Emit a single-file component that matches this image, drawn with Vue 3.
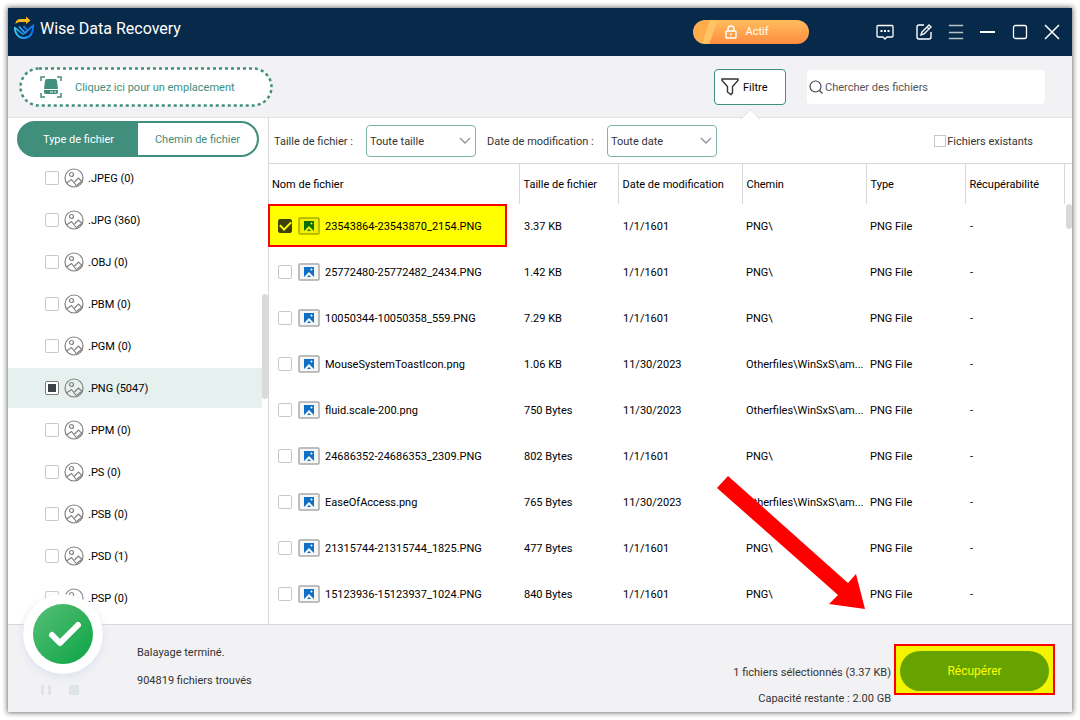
<script setup>
import { ref } from 'vue'

const types = [
  ['.JPEG', 0], ['.JPG', 360], ['.OBJ', 0], ['.PBM', 0], ['.PGM', 0], ['.PNG', 5047],
  ['.PPM', 0], ['.PS', 0], ['.PSB', 0], ['.PSD', 1], ['.PSP', 0],
].map(([name, count]) => ({ name, count, partial: name === '.PNG' }))

const columns = ['Nom de fichier', 'Taille de fichier', 'Date de modification', 'Chemin', 'Type', 'Récupérabilité']

const files = ref([
  { name: '23543864-23543870_2154.PNG', size: '3.37 KB', date: '1/1/1601', path: 'PNG\\', checked: true },
  { name: '25772480-25772482_2434.PNG', size: '1.42 KB', date: '1/1/1601', path: 'PNG\\' },
  { name: '10050344-10050358_559.PNG', size: '7.29 KB', date: '1/1/1601', path: 'PNG\\' },
  { name: 'MouseSystemToastIcon.png', size: '1.06 KB', date: '11/30/2023', path: 'Otherfiles\\WinSxS\\am...' },
  { name: 'fluid.scale-200.png', size: '750 Bytes', date: '11/30/2023', path: 'Otherfiles\\WinSxS\\am...' },
  { name: '24686352-24686353_2309.PNG', size: '802 Bytes', date: '1/1/1601', path: 'PNG\\' },
  { name: 'EaseOfAccess.png', size: '765 Bytes', date: '11/30/2023', path: 'Otherfiles\\WinSxS\\am...' },
  { name: '21315744-21315744_1825.PNG', size: '477 Bytes', date: '1/1/1601', path: 'PNG\\' },
  { name: '15123936-15123937_1024.PNG', size: '840 Bytes', date: '1/1/1601', path: 'PNG\\' },
])
</script>

<template>
  <div class="desk">
    <div class="window">
      <header class="titlebar">
        <svg class="logo" width="22" height="24" viewBox="0 0 22 24" fill="none">
          <defs><linearGradient id="blue" x1="0" y1="0" x2="1" y2="0"><stop offset="0" stop-color="#35c8f2" /><stop offset="1" stop-color="#1273f5" /></linearGradient></defs>
          <path d="M2.500 8C2.500 5 4.500 3 8 3h5V0.500L17.500 4.500 13 8V6H8C5.500 6 4 6.500 2.500 8z" fill="#f9b621" />
          <path d="M1.800 11c0 7 4 11 9.200 11s9-4 9.200-12.500c-3 2-5 4.500-8.200 7.500L6 10.500" stroke="url(#blue)" stroke-width="1.800" />
          <path d="M2 12c3 1.500 5 5 9 6.500M10.500 10l3.500 4" stroke="url(#blue)" stroke-width="1.600" />
        </svg>
        <h1>Wise Data Recovery</h1>
        <button class="active" type="button">
          <svg width="12" height="14" viewBox="0 0 12 14" fill="none" stroke="#fff" stroke-width="1.500">
            <rect x="1" y="6" width="10" height="7" rx="1" /><path d="M3 6V4a3 3 0 0 1 6 0v2M6 8.500v2" />
          </svg>
          Actif
        </button>
        <nav class="tools">
          <button type="button" aria-label="Commentaires">
            <svg width="18" height="18" viewBox="0 0 18 18" fill="none" stroke="#fff" stroke-width="1.300">
              <path d="M2 2.500h14q1 0 1 1V13q0 1-1 1h-5l-2 2-2-2H2q-1 0-1-1V3.500q0-1 1-1z" /><path d="M4.500 8h2M8 8h2M11.500 8h2" stroke-width="2" />
            </svg>
          </button>
          <button type="button" aria-label="Modifier">
            <svg width="18" height="18" viewBox="0 0 18 18" fill="none" stroke="#fff" stroke-width="1.400">
              <path d="M9 2H4Q2 2 2 4v10q0 2 2 2h10q2 0 2-2V9" /><path d="M7 9l7-7 2 2-7 7-3 1zM12 4l2 2" />
            </svg>
          </button>
          <button type="button" aria-label="Menu">
            <svg width="18" height="18" viewBox="0 0 18 18" fill="#b5c4c4"><path d="M2 2h14v1H2zM2 9h14v1H2zM2 15h14v1H2z" stroke="#b5c4c4" stroke-width=".5" /></svg>
          </button>
          <button type="button" aria-label="Réduire">
            <svg width="18" height="18" viewBox="0 0 18 18" stroke="#fff" stroke-width="2"><path d="M1 9h15" /></svg>
          </button>
          <button type="button" aria-label="Agrandir">
            <svg width="18" height="18" viewBox="0 0 18 18" fill="none" stroke="#fff" stroke-width="1.300"><rect x="2.500" y="2.500" width="13" height="13" rx="2" /></svg>
          </button>
          <button type="button" aria-label="Fermer">
            <svg width="18" height="18" viewBox="0 0 18 18" stroke="#fff" stroke-width="1.500"><path d="M2 2l14 14M16 2L2 16" /></svg>
          </button>
        </nav>
      </header>

      <div class="toolbar">
        <button class="location" type="button">
          <svg class="dots" width="100%" height="100%">
            <rect x="1.500" y="1.500" width="251" height="37" rx="18.500" fill="#fff" stroke="#408e7c" stroke-width="2.500" stroke-dasharray="3 3" />
          </svg>
          <svg class="drive" width="22" height="22" viewBox="0 0 22 22" fill="#408e7c">
            <path d="M1 5V1h4M17 1h4v4M21 17v4h-4M5 21H1v-4" fill="none" stroke="#408e7c" stroke-width="1.500" />
            <path d="M7 3h8q2 0 2 2l1 8H4l1-8q0-2 2-2z" />
            <path d="M4 14h14v2q0 2-2 2H6q-2 0-2-2z" /><path d="M10 16h3M14 16h2" stroke="#fff" />
          </svg>
          <span class="caption">Cliquez ici pour un emplacement</span>
        </button>
        <button class="filter" type="button">
          <svg width="18" height="18" viewBox="0 0 18 18" fill="none" stroke="#333" stroke-width="1.400">
            <path d="M1 1h16v1.500l-5.500 6V15l-1.500 1.500L6.500 14V8.500L1 2.500z" />
          </svg>
          <span class="caption">Filtre</span>
        </button>
        <label class="search">
          <svg width="14" height="14" viewBox="0 0 14 14" fill="none" stroke="#444" stroke-width="1.200"><circle cx="6.500" cy="6.500" r="5.500" /><path d="M10.500 10.500l3 3" /></svg>
          <input class="caption" type="text" placeholder="Chercher des fichiers" aria-label="Chercher des fichiers" />
        </label>
      </div>

      <main class="body">
        <aside class="side">
          <div class="tabs">
            <button class="on caption" type="button">Type de fichier</button>
            <button class="caption" type="button">Chemin de fichier</button>
          </div>
          <ul class="types">
            <li v-for="t in types" :key="t.name" :class="{ current: t.partial }">
              <label>
                <input type="checkbox" class="box" :class="{ partial: t.partial }" />
                <svg width="20" height="20" viewBox="0 0 20 20" fill="none" stroke="#808080" stroke-width="1.200">
                  <circle cx="10" cy="10" r="9" /><circle cx="7.500" cy="6.500" r="2" />
                  <path d="M2.500 15l5-3.500 5.500 7M10.500 14l4-4 4 4M13 17l4-3" />
                </svg>
                <span class="caption">{{ t.name }} ({{ t.count }})</span>
              </label>
            </li>
          </ul>
          <i class="thumb"></i>
        </aside>

        <section class="content">
          <div class="filters">
            <label class="short caption" for="size">Taille de fichier :</label>
            <span class="pick"><select id="size" class="caption"><option>Toute taille</option></select>
              <svg width="12" height="8" viewBox="0 0 12 8" fill="none" stroke="#8c959c" stroke-width="1.400"><path d="M1 1l5 5 5-5" /></svg></span>
            <label class="long caption" for="date">Date de modification :</label>
            <span class="pick"><select id="date" class="caption"><option>Toute date</option></select>
              <svg width="12" height="8" viewBox="0 0 12 8" fill="none" stroke="#8c959c" stroke-width="1.400"><path d="M1 1l5 5 5-5" /></svg></span>
            <label class="existing"><input type="checkbox" class="box square" /><span class="caption">Fichiers existants</span></label>
          </div>
          <table>
            <colgroup><col class="c1" /><col class="c2" /><col class="c3" /><col class="c4" /><col class="c5" /><col class="c6" /><col /></colgroup>
            <thead>
              <tr><th v-for="c in columns" :key="c">{{ c }}</th><td></td></tr>
            </thead>
            <tbody>
              <tr v-for="f in files" :key="f.name">
                <td class="name">
                  <label :class="{ marked: f.checked }">
                    <input v-model="f.checked" type="checkbox" class="box" />
                    <svg width="22" height="18" viewBox="0 0 22 18">
                      <rect class="frame" x="1" y="1" width="20" height="16" rx="1" stroke-width="1.500" />
                      <path class="photo" d="M6 4h10v10l-5-5-5 5z" /><circle class="sun" cx="13.500" cy="6.500" r="1" />
                      <path class="photo" d="M9 14l2-2 2 2z" />
                    </svg>
                    <span class="caption">{{ f.name }}</span>
                  </label>
                </td>
                <td class="inset">{{ f.size }}</td>
                <td class="inset">{{ f.date }}</td>
                <td>{{ f.path }}</td>
                <td>PNG File</td>
                <td class="inset">-</td>
                <td></td>
              </tr>
            </tbody>
          </table>
          <i class="thumb"></i>
        </section>
      </main>

      <footer class="status">
        <div class="scan">
          <p>Balayage terminé.</p>
          <p>904819 fichiers trouvés</p>
        </div>
        <div class="summary">
          <p>1 fichiers sélectionnés (3.37 KB)</p>
          <p>Capacité restante : 2.00 GB</p>
        </div>
        <div class="callout"><button type="button">Récupérer</button></div>
        <svg class="done" width="80" height="80" viewBox="0 0 80 80">
          <defs><linearGradient id="g" x1="0" y1="0" x2="1" y2="1"><stop offset="0" stop-color="#58bf77" /><stop offset="1" stop-color="#0ba444" /></linearGradient></defs>
          <circle cx="40" cy="40" r="40" fill="#fff" /><circle cx="40" cy="40" r="30" fill="url(#g)" />
          <path d="M29 41l8 8 18-18" fill="none" stroke="#fff" stroke-width="6" stroke-linecap="round" stroke-linejoin="round" />
        </svg>
        <svg class="controls" width="40" height="10" viewBox="0 0 40 10" fill="#dfe5e5"><path d="M0 0h3v10H0zM7 0h3v10H7zM28 0h10v10H28z" /></svg>
      </footer>
      <svg class="arrow" width="150" height="134" viewBox="0 0 150 134"><path d="M11 0L131 107l8-9 9 35-36-5 9-9L0 12z" fill="#f00" /></svg>
    </div>
  </div>
</template>

<style>
body { margin: 0; background: #fff; }
</style>

<style scoped>
* { box-sizing: border-box; }
.desk { height: 100vh; min-height: 640px; padding: 8px; font: 11px/16px Roboto, "Noto Sans", sans-serif; color: #000; }
.window { height: 100%; display: flex; flex-direction: column; position: relative; box-shadow: 0 0 5px 1px #777; }
button, input, select { font: inherit; color: inherit; margin: 0; }
button { border: 0; background: none; padding: 0; }
p, h1, ul { margin: 0; padding: 0; }
svg { flex: none; display: block; }
.titlebar { flex: none; height: 48px; background: #082a4a; color: #fff; display: flex; align-items: center; padding: 0 11px 0 5px; }
.logo { margin-bottom: 8px; }
h1 { font-size: 16px; line-height: 20px; font-weight: 400; margin: 0 auto 6px 5px; }
.active { width: 116px; height: 24px; border-radius: 12px; margin-right: 67px; background: linear-gradient(110deg, #ffad4a 14%, #ffc568 14%, #ffc060 20%, transparent 20%), linear-gradient(#ffbd5c, #ff8d40); display: flex; align-items: center; justify-content: center; gap: 8px; padding-right: 8px; }
.tools { display: flex; gap: 14px; }
.tools button:first-child { margin-right: 7px; }
.toolbar { flex: none; height: 62px; padding: 0 27px 0 11px; background: #f2f2f4; border-bottom: 1px solid #e2e2e2; display: flex; align-items: center; }
.location { position: relative; width: 254px; height: 40px; color: #408e7c; display: flex; align-items: center; padding-left: 21px; gap: 13px; }
.dots { position: absolute; inset: 0; }
.drive, .location span { position: relative; }
.filter { position: relative; width: 72px; height: 36px; margin-left: auto; border: 1px solid #408e7c; border-radius: 4px; background: #fff; display: flex; align-items: center; padding-left: 6px; gap: 4px; }
.filter::after { content: ""; position: absolute; left: 28px; top: 42px; width: 14px; height: 14px; background: #fff; border: solid #ddd; border-width: 1px 0 0 1px; transform: rotate(45deg); clip-path: polygon(0 0, 100% 0, 0 100%); }
.search { width: 238px; height: 34px; margin-left: 21px; background: #fff; border-radius: 4px; display: flex; align-items: center; padding-left: 2px; gap: 2px; }
.search input { flex: 1; min-width: 0; border: 0; padding: 0; outline: 0; background: none; }
.search input::placeholder { color: #555; opacity: 1; }
.body { flex: 1; min-height: 0; display: flex; background: #fff; }
.side { position: relative; width: 260px; flex: none; overflow: hidden; }
.tabs { display: flex; height: 36px; margin: 3px 9px 0; border: 2px solid #408e7c; border-radius: 18px; overflow: hidden; color: #408e7c; background: linear-gradient(90deg, #408e7c 50%, #fff 50%); }
.tabs button { flex: 1; }
.tabs .on { background: #408e7c; color: #fff; }
.types { list-style: none; margin-top: 1px; }
.types li { height: 40px; margin-bottom: 2px; margin-right: 6px; padding-left: 37px; }
.types .current { background: #e6f0ee; }
.types label { height: 100%; display: flex; align-items: center; }
.types svg { margin: 0 4px 0 5px; }
.box { appearance: none; flex: none; width: 14px; height: 14px; border: 1px solid #c8c8c8; border-radius: 2px; background: #fff; display: grid; place-items: center; }
.partial { border-color: #777; }
.partial::after { content: ""; width: 8px; height: 8px; background: #3c4248; }
.square { width: 12px; height: 12px; border-radius: 0; }
.thumb { position: absolute; background: #dadada; border-radius: 3px; width: 6px; right: 0; }
.side .thumb { top: 176px; height: 105px; }
.content { position: relative; flex: 1; min-width: 0; overflow: hidden; box-shadow: inset 1px 0 #d8d8d8; }
.content .thumb { top: 86px; height: 25px; }
.filters { height: 46px; border-bottom: 1px solid #d8d8d8; display: flex; align-items: center; padding: 0 39px 0 6px; color: #333; }
.short { width: 92px; }
.long { width: 120px; }
.pick { position: relative; width: 110px; height: 32px; margin-right: 11px; }
.pick select { appearance: none; width: 100%; height: 100%; border: 1px solid #7fb5a8; border-radius: 4px; background: #fff; padding: 0 3px; }
.pick svg { position: absolute; right: 5px; top: 12px; pointer-events: none; }
.existing { margin-left: auto; display: flex; align-items: center; gap: 1px; }
table { width: 100%; border-collapse: collapse; table-layout: fixed; }
.c1 { width: 251px; } .c2 { width: 99px; } .c3 { width: 124px; } .c4 { width: 124px; } .c5 { width: 99px; } .c6 { width: 99px; }
th { height: 40px; text-align: left; font-weight: 400; padding: 2px 4px 0; border-right: 1px solid #d8d8d8; white-space: nowrap; }
td { height: 46px; padding: 0 0 0 4px; white-space: nowrap; }
thead td { height: 40px; }
td.inset { padding-left: 5px; }
td.name { padding: 0; vertical-align: top; }
.name label { width: 239px; height: 43px; padding-left: 10px; display: flex; align-items: center; }
.name svg { margin: 0 5px 0 6px; }
.frame { fill: #f6f6f6; stroke: #aaa; }
.photo { fill: #0f6fc5; }
.sun { fill: #fff; }
.marked { background: #ff0; outline: 2px solid #f00; outline-offset: -2px; }
.marked .box { background: #40400a; border-color: #40400a; }
.marked .box::after { content: ""; width: 9px; height: 5px; border: solid #ff0; border-width: 0 0 2px 2px; transform: translateY(-1px) rotate(-45deg); }
.marked .frame { fill: #f0f000; stroke: #aaaa00; }
.marked .photo { fill: #087000; }
.marked .sun { fill: #ff0; }
.status { position: relative; flex: none; height: 88px; background: #f2f2f4; border-top: 1px solid #d8d8d8; display: flex; padding: 19px 17px 0 129px; color: #333; }
.scan { margin-right: auto; padding-top: 1px; display: grid; align-content: start; gap: 12px; }
.summary { text-align: right; padding-top: 21px; display: grid; align-content: start; gap: 10px; margin-right: 3px; }
.callout { width: 161px; height: 51px; border: 2px solid #f00; background: #f4f400; padding: 5px 4px; }
.callout button { width: 149px; height: 40px; border-radius: 20px; background: #66a300; color: #ff0; font-size: 12px; }
.done { position: absolute; left: 15px; top: -31px; border-radius: 50%; box-shadow: 0 3px 8px #dce2f0; }
.controls { position: absolute; left: 33px; top: 60px; }
.arrow { position: absolute; right: 205px; bottom: 102px; pointer-events: none; }
/* Roboto sits high in its line box, so captions beside icons get a little room above. */
.window .caption { padding-top: 2px; }
</style>
